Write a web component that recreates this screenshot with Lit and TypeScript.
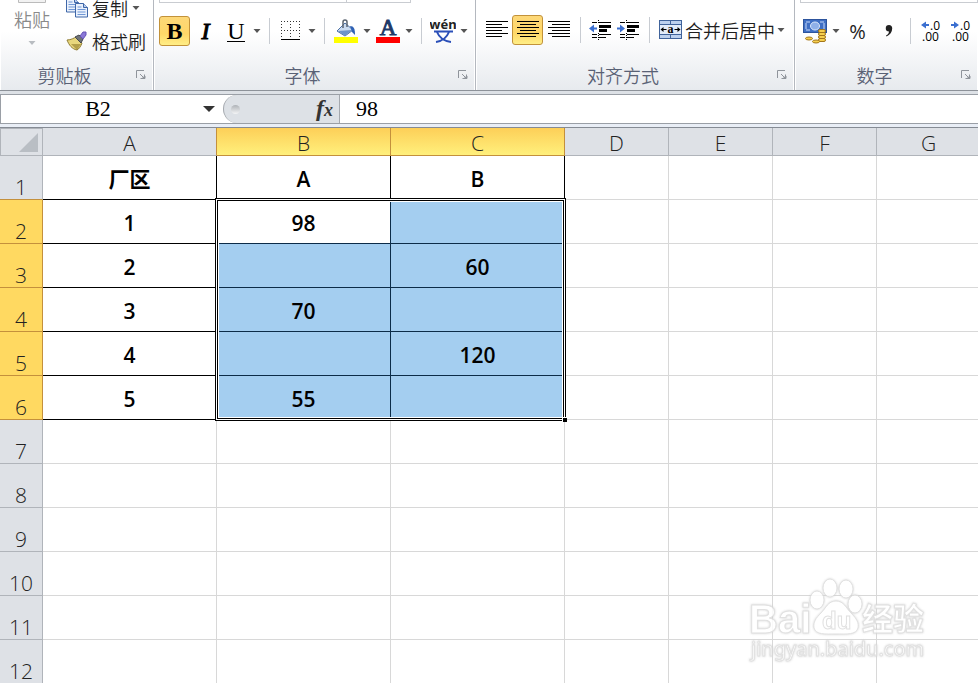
import { LitElement, html, svg, css, nothing } from "lit";
import { customElement } from "lit/decorators.js";
import { classMap } from "lit/directives/class-map.js";
import { styleMap } from "lit/directives/style-map.js";

const controls = css`
  * { box-sizing: border-box; }
  button, input {
    font: inherit;
    color: inherit;
    margin: 0;
    padding: 0;
    border: 0;
    background: none;
    border-radius: 0;
  }
  svg { display: block; flex: none; }
`;

const arrow = html`<svg class="arrow" width="12" height="4" viewBox="0 0 12 4" aria-hidden="true"><path d="M2.5 0h7L6 4z" fill="currentColor" /></svg>`;

const lines = (rows: Array<[number, number]>) => svg`${rows.map(
  ([x, w], i) => svg`<rect x=${x} y=${i * 3} width=${w} height="1" />`
)}`;

const bars = (rows: Array<[number, number]>) => html`<svg width="22" height="18" viewBox="0 0 22 18" fill="#000">${lines(rows)}</svg>`;

const sheet = (x: number, y: number) => svg`
  <g transform="translate(${x} ${y})">
    <path d="M.5 .5h8l4 4v9.500h-12z" fill="#eaf1fc" stroke="#3f67a8" />
    <path d="M8.500 .5v4h4" fill="#b9cdee" stroke="#3f67a8" />
    <path d="M2.500 4h4M2.500 6.500h8M2.500 9h8M2.500 11.500h8" stroke="#6f97d6" />
  </g>`;

const indent = (back: boolean) => html`
  <svg width="24" height="20" viewBox="0 0 24 20">
    <g fill="#000">
      <rect x="3" y="2" width="5" height="1" /><rect x="10" y="2" width="12" height="1" />
      <rect x="10" y="5" width="12" height="3" /><rect x="10" y="9" width="8" height="3" />
      <rect x="3" y="14" width="5" height="1" /><rect x="10" y="14" width="12" height="1" />
      <rect x="3" y="17" width="5" height="1" /><rect x="10" y="17" width="7" height="1" />
    </g>
    <path d="M9.500 0v4M9.500 13v7" stroke="#000" stroke-dasharray="1 1" />
    <path d=${back ? "M0 8.500l5-4v3h3v2h-3v3z" : "M8 8.500l-5-4v3h-3v2h3v3z"} fill="#3a6fd0" />
  </svg>`;

const decimals = (more: boolean) => html`
  <svg class="num" width="24" height="22" viewBox="0 0 24 22">
    <path d=${more ? "M2 5l5-3.500v2.500h3v2h-3v2.500z" : "M10 5l-5-3.500v2.500h-3v2h3v2.500z"} fill="#3a6fd0" />
    <text x="11" y="10">.0</text><text x="3" y="21">.00</text>
  </svg>`;

const icons = {
  copy: html`<svg width="22" height="21" viewBox="0 0 22 21">${sheet(0, 0)}${sheet(9, 5)}</svg>`,
  brush: html`<svg width="22" height="20" viewBox="0 0 22 20">
    <path d="M1 9C5 9 8 7 10 6l6 6c-1 3-3 6-5 7C6 18 3 14 1 9z" fill="#e8d77c" stroke="#8f7c34" />
    <path d="M5 13l6 6 4-6z" fill="#8f7a28" opacity=".6" />
    <path d="M9 6l4-2 4 4-2 4z" fill="#6f7378" stroke="#43474c" />
    <path d="M14 5l3-4 3 0 0 3-3 4z" fill="#8a78d8" stroke="#6453b5" />
  </svg>`,
  borders: html`<svg width="20" height="20" viewBox="0 0 20 20" fill="none" stroke="#333">
    <path d="M0 .5h19M0 9.500h19M.5 0v17M9.500 0v17M18.500 0v17" stroke-dasharray="1 2" />
    <path d="M0 18.500h19" stroke="#000" />
  </svg>`,
  fill: html`<svg width="24" height="24" viewBox="0 0 24 24">
    <path d="M3 12l8-8 8 7-8 6z" fill="#c9daf0" stroke="#4a6fa5" />
    <path d="M4 12l14-1-7 6z" fill="#6d94cb" />
    <path d="M9 9V3a2 2 0 0 1 4 0v5" fill="none" stroke="#5b6470" stroke-width="1.500" />
    <path d="M16 7c4 0 5 3 5 9l-3-3z" fill="#2f62b5" />
    <rect y="18" width="24" height="6" fill="#ff0" />
  </svg>`,
  color: html`<svg class="letter" width="24" height="24" viewBox="0 0 24 24">
    <text x="12" y="16" text-anchor="middle">A</text><rect y="18" width="24" height="6" fill="#f00" />
  </svg>`,
  phonetic: html`<svg class="wen" width="26" height="26" viewBox="0 0 26 26">
    <text class="latin" x="13" y="11" text-anchor="middle">wén</text>
    <path d="M4 13.500h19M7 14c2 5 6 9 14 10M19 14c-2 5-6 9-13 10" fill="none" stroke="#2a4fb8" stroke-width="2" />
  </svg>`,
  merge: html`<svg class="mini" width="24" height="20" viewBox="0 0 24 20">
    <rect x=".5" y=".5" width="22" height="18" fill="#bcd0ee" stroke="#40639b" />
    <path d="M1 4.500h22M1 14.500h22M11.500 1v3M11.500 15v3" stroke="#40639b" />
    <rect x="1" y="5" width="21" height="9" fill="#e2ebf9" />
    <text x="11.500" y="13" text-anchor="middle">a</text>
    <path d="M1.500 9.500l3-2.500v2h3v1h-3v2zM21.500 9.500l-3-2.500v2h-3v1h3v2z" fill="#000" />
  </svg>`,
  currency: html`<svg width="24" height="25" viewBox="0 0 24 25">
    <rect x=".5" y=".5" width="23" height="13" fill="#3f6fc4" stroke="#2d549d" />
    <path d="M3 3h4M17 3h4M3 11h4M17 11h4M3 4v6M21 4v6" stroke="#c7dafa" />
    <ellipse cx="12" cy="7" rx="4.500" ry="4" fill="#8fb0e8" stroke="#dbe7fb" />
    <g fill="#f6cf4e" stroke="#a3761a">
      <rect x="15.500" y="19.500" width="7" height="3" rx="1.500" /><rect x="15.500" y="16.500" width="7" height="3" rx="1.500" />
      <rect x="15.500" y="13.500" width="7" height="3" rx="1.500" /><rect x="15.500" y="10.500" width="7" height="3" rx="1.500" />
      <ellipse cx="6" cy="19.500" rx="3.500" ry="1.500" /><ellipse cx="13" cy="22.500" rx="3.500" ry="1.500" />
    </g>
  </svg>`,
};

@customElement("ribbon-group")
class RibbonGroup extends LitElement {
  static properties = { label: { type: String } };
  declare label: string;
  static styles = [controls, css`
    :host {
      display: flex;
      flex-direction: column;
      min-width: 0;
      height: 90px;
      border-right: 1px solid #b4b8bf;
      box-shadow: inset -1px 0 #fff, inset 1px 0 #fff;
      overflow: hidden;
    }
    :host(:last-of-type) { border-right: 0; }
    .body { flex: 1; min-height: 0; }
    .caption { display: flex; align-items: center; height: 30px; color: #596175; }
    .label { flex: 1; text-align: center; font-size: 18px; line-height: 28px; }
    .launcher { width: 24px; height: 22px; display: flex; align-items: center; justify-content: center; }
  `];
  render() {
    return html`
      <div class="body"><slot></slot></div>
      <div class="caption">
        <span class="label">${this.label}</span>
        <button class="launcher" aria-label=${this.label}>
          <svg width="10" height="10" viewBox="0 0 10 10" stroke="#8f949b" fill="none">
            <path d="M.5 8V.5H8M4 4l4 4M8.500 4.500v4h-4" /><path d="M6 8.500h3V6z" fill="#8f949b" />
          </svg>
        </button>
      </div>`;
  }
}

@customElement("office-ribbon")
class OfficeRibbon extends LitElement {
  static styles = [controls, css`
    :host {
      display: grid;
      grid-template-columns: 154px 322px 319px minmax(183px, 1fr);
      background: linear-gradient(#fff 35%, #e7eaee);
      border-bottom: 1px solid #8d9299;
      color: #1e1e1e;
      font-size: 18px;
    }
    .clipboard { display: flex; }
    .paste {
      display: flex;
      flex-direction: column;
      align-items: center;
      width: 64px;
      height: 56px;
      color: #8a8a8a;
      line-height: 20px;
    }
    .paste .arrow { margin-top: 12px; color: #b8bcc1; }
    .paste .tray { margin-bottom: 6px; }
    .stack { display: flex; flex-direction: column; align-items: flex-start; gap: 13px; }
    .row { display: flex; align-items: center; gap: 4px; height: 24px; padding-left: 2px; line-height: 24px; white-space: nowrap; }
    .row:first-child { height: 16px; }
    .row .arrow { margin-left: -2px; }
    .arrow { color: #555; }
    .combos { display: flex; height: 3px; margin-left: 5px; }
    .combo { border: 1px solid #c9ccd1; border-top: 0; background: #fff; height: 3px; }
    .combo + .combo { border-left: 0; }
    .face { width: 188px; }
    .size { width: 64px; }
    .format { flex: 1; }
    .tools { display: flex; align-items: center; height: 56px; padding-left: 5px; }
    .bare { height: 60px; }
    .tool { display: flex; align-items: center; justify-content: center; width: 31px; height: 30px; }
    .small { width: 28px; }
    .small:last-child { width: 32px; }
    .on { border: 1px solid #c2923a; border-radius: 3px; background: linear-gradient(#fdd878, #ffd768 60%, #ffee86); }
    .split { display: flex; align-items: center; height: 30px; }
    .icon { width: 30px; display: flex; justify-content: center; }
    .merge .icon { width: 29px; }
    .sep { width: 1px; height: 26px; margin: 0 6px; background: #c8ccd2; }
    .serif { font: 24px/28px "Liberation Serif", serif; color: #000; }
    .bold { font-weight: bold; }
    .italic { font-style: italic; -webkit-text-stroke: 1px #000; }
    .underline { border-bottom: 1px solid #000; line-height: 20px; }
    .percent { font: 20px "Open Sans", sans-serif; color: #222; }
    .letter text { font: 23px "Liberation Serif", serif; fill: #1f3a68; stroke: #1f3a68; }
    .latin { font: bold 13px "Noto Sans", sans-serif; fill: #222; }
    .mini text { font: bold 12px "Liberation Serif", serif; }
    .num text { font: 12px "Open Sans", sans-serif; fill: #000; }
    .merge { white-space: nowrap; }
  `];
  split(name: string, icon: unknown) {
    return html`<button class="split" aria-label=${name}><span class="icon">${icon}</span>${arrow}</button>`;
  }
  render() {
    return html`
      <ribbon-group label="剪贴板">
        <div class="clipboard">
          <button class="paste">
            <svg class="tray" width="28" height="3" viewBox="0 0 28 3"><path d="M.5 0v2.500h27V0" fill="#f2f2f2" stroke="#bbb" /></svg>
            粘贴${arrow}
          </button>
          <div class="stack">
            <button class="row">${icons.copy}<span>复制</span>${arrow}</button>
            <button class="row">${icons.brush}<span>格式刷</span></button>
          </div>
        </div>
      </ribbon-group>
      <ribbon-group label="字体">
        <div class="combos"><span class="combo face"></span><span class="combo size"></span></div>
        <div class="tools">
          <button class="tool on" aria-pressed="true"><span class="serif bold">B</span></button>
          <button class="tool"><span class="serif italic">I</span></button>
          ${this.split("U", html`<span class="serif underline">U</span>`)}
          <span class="sep"></span>
          ${this.split("边框", icons.borders)}
          <span class="sep"></span>
          ${this.split("填充颜色", icons.fill)}
          ${this.split("字体颜色", icons.color)}
          <span class="sep"></span>
          ${this.split("拼音", icons.phonetic)}
        </div>
      </ribbon-group>
      <ribbon-group label="对齐方式">
        <div class="tools bare">
          <button class="tool" aria-label="左对齐">${bars([[0, 22], [0, 16], [0, 22], [0, 16], [0, 22], [0, 16]])}</button>
          <button class="tool on" aria-pressed="true" aria-label="居中">${bars([[0, 22], [3, 16], [0, 22], [3, 16], [0, 22], [3, 16]])}</button>
          <button class="tool" aria-label="右对齐">${bars([[0, 22], [4, 18], [0, 22], [4, 18], [0, 22], [4, 18]])}</button>
          <span class="sep"></span>
          <button class="tool small" aria-label="减少缩进">${indent(true)}</button>
          <button class="tool small" aria-label="增加缩进">${indent(false)}</button>
          <span class="sep"></span>
          <button class="split merge"><span class="icon">${icons.merge}</span>合并后居中${arrow}</button>
        </div>
      </ribbon-group>
      <ribbon-group label="数字">
        <div class="combos"><span class="combo format"></span></div>
        <div class="tools">
          ${this.split("货币", icons.currency)}
          <button class="tool percent">%</button>
          <button class="tool" aria-label="千位分隔样式">
            <svg width="8" height="12" viewBox="0 0 8 12"><path d="M4 0a3.200 3.200 0 0 1 3.200 3.500C7.200 7 5 10 1.500 11.500L1 10.500C3 9.500 4 8 4 6.500A3.200 3.200 0 0 1 4 0z" fill="#222" /></svg>
          </button>
          <span class="sep"></span>
          <button class="tool small" aria-label="增加小数位数">${decimals(true)}</button>
          <button class="tool small" aria-label="减少小数位数">${decimals(false)}</button>
        </div>
      </ribbon-group>`;
  }
}

@customElement("formula-bar")
class FormulaBar extends LitElement {
  static styles = [controls, css`
    :host { display: block; background: #dde1e6; padding-top: 3px; border-bottom: 1px solid #858b94; }
    .bar {
      display: flex;
      height: 30px;
      background: #fff;
      border: solid #9a9fa6;
      border-width: 1px 0 1px 1px;
      font: 22px/28px "Liberation Serif", serif;
      color: #000;
    }
    .name { width: 194px; text-align: center; }
    .drop { width: 28px; display: flex; align-items: center; justify-content: center; color: #333; }
    .pill {
      display: flex;
      align-items: center;
      justify-content: space-between;
      width: 117px;
      padding: 0 6px 0 7px;
      background: #dde1e6;
      border: 1px solid #a4a8ae;
      border-width: 0 1px;
      border-radius: 14px 0 0 14px;
    }
    .knob { width: 9px; height: 9px; border-radius: 5px; background: linear-gradient(#aeb2b7, #f4f5f6); }
    .fx { font: italic bold 24px/26px "Liberation Serif", serif; color: #333; display: flex; align-items: baseline; }
    .fx small { font-size: 18px; }
    .value { flex: 1; min-width: 0; padding-left: 16px; }
    .foot { height: 3px; background: #e9eef6; }
  `];
  render() {
    return html`
      <div class="bar">
        <input class="name" aria-label="名称框" value="B2" />
        <button class="drop" aria-label="名称列表"><svg width="12" height="6" viewBox="0 0 12 6"><path d="M0 0h12L6 6z" fill="currentColor" /></svg></button>
        <div class="pill"><span class="knob"></span><button class="fx">f<small>x</small></button></div>
        <input class="value" aria-label="编辑栏" value="98" />
      </div>
      <div class="foot"></div>`;
  }
}

const HEAD_W = 43;
const HEAD_H = 28;
const ROW_H = 44;
const COLUMNS: Array<[string, number]> = [["A", 174], ["B", 174], ["C", 174], ["D", 104], ["E", 104], ["F", 104], ["G", 104]];
const ROWS = 12;
const DATA: string[][] = [
  ["厂区", "A", "B"],
  ["1", "98", ""],
  ["2", "", "60"],
  ["3", "70", ""],
  ["4", "", "120"],
  ["5", "55", ""],
];
const SELECTED = { left: 1, right: 2, top: 1, bottom: 5 };

@customElement("sheet-grid")
class SheetGrid extends LitElement {
  static styles = [controls, css`
    :host {
      display: block;
      position: relative;
      flex: 1;
      min-height: 0;
      overflow: hidden;
      background: #fff;
      font-family: "Open Sans", "Noto Sans CJK SC", sans-serif;
    }
    table { table-layout: fixed; border-collapse: separate; border-spacing: 0; width: max-content; font-size: 21px; }
    th, td { padding: 0; overflow: hidden; text-align: center; border: 0 solid #d8d8d8; border-width: 0 1px 1px 0; }
    td { height: 44px; line-height: 30px; font-weight: 600; color: #000; padding-top: 3px; }
    th { font-weight: 300; color: #222; background: #dee1e6; border-color: #b0b4ba; }
    thead th { height: 28px; line-height: 24px; padding-top: 2px; }
    tbody th { height: 44px; vertical-align: bottom; line-height: 24px; }
    thead .picked { background: linear-gradient(#fdcf58, #fff07c); border-color: #c4903c; }
    tbody .picked { background: #ffd961; border-color: #c4903c; }
    thead .before { border-right-color: #c4903c; }
    tbody .before { border-bottom-color: #c4903c; }
    .corner { border-left: 1px solid #b0b4ba; box-shadow: inset 0 1px #b0b4ba; }
    .corner svg { margin: 1px 0 0 18px; }
    .ruled { border-color: #000; }
    .blue { background: #a4cef0; }
    .inner { border-color: #0c2c48; }
    .range {
      position: absolute;
      border: 1px solid #000;
      box-shadow: inset 0 0 0 1px #fff, inset 0 0 0 2px #000, inset 0 0 0 3px #fff;
      pointer-events: none;
    }
    .handle { position: absolute; right: -2px; bottom: -2px; width: 5px; height: 5px; background: #000; border: 1px solid #fff; border-width: 1px 0 0 1px; }
  `];
  render() {
    const s = SELECTED;
    const offset = (n: number) => HEAD_W + COLUMNS.slice(0, n).reduce((sum, [, w]) => sum + w, 0);
    const left = offset(s.left) - 2;
    const top = HEAD_H + s.top * ROW_H - 2;
    const box = {
      left: `${left}px`,
      top: `${top}px`,
      width: `${offset(s.right + 1) + 1 - left}px`,
      height: `${HEAD_H + (s.bottom + 1) * ROW_H + 1 - top}px`,
    };
    const inCols = (c: number) => c >= s.left && c <= s.right;
    const inRows = (r: number) => r >= s.top && r <= s.bottom;
    return html`
      <table>
        <colgroup>
          <col style=${styleMap({ width: `${HEAD_W}px` })} />
          ${COLUMNS.map(([, w]) => html`<col style=${styleMap({ width: `${w}px` })} />`)}
        </colgroup>
        <thead>
          <tr>
            <th class="corner"><svg width="20" height="20" viewBox="0 0 20 20"><path d="M19 0v19H0z" fill="#b9bec4" /></svg></th>
            ${COLUMNS.map(([name], c) => html`<th scope="col" class=${classMap({ picked: inCols(c), before: c === s.left - 1 })}>${name}</th>`)}
          </tr>
        </thead>
        <tbody>
          ${Array.from({ length: ROWS }, (_, r) => html`
            <tr>
              <th scope="row" class=${classMap({ picked: inRows(r), before: r === s.top - 1 })}>${r + 1}</th>
              ${COLUMNS.map((_col, c) => {
                const text = DATA[r]?.[c];
                const chosen = inCols(c) && inRows(r);
                const active = c === s.left && r === s.top;
                return html`<td class=${classMap({ ruled: text !== undefined, inner: chosen, blue: chosen && !active })}>${text || nothing}</td>`;
              })}
            </tr>`)}
        </tbody>
      </table>
      <div class="range" style=${styleMap(box)}><span class="handle"></span></div>`;
  }
}

@customElement("site-mark")
class SiteMark extends LitElement {
  static styles = css`
    :host { display: block; opacity: 0.85; pointer-events: none; }
    svg { display: block; filter: drop-shadow(0 0 1px #ccc); }
    text, .pad { fill: #fff; stroke: #dcdcdc; stroke-width: 1px; }
    .big { font: bold 40px "Liberation Sans", sans-serif; }
    .du { font: bold 24px "Liberation Sans", sans-serif; }
    .cjk { font: bold 31px "Noto Sans CJK SC", sans-serif; }
    .url { font: 20px "Noto Sans", sans-serif; }
  `;
  render() {
    return html`
      <svg width="200" height="105" viewBox="0 0 200 105">
        <text class="big" x="9" y="63">Bai</text>
        <g class="pad">
          <ellipse cx="77" cy="30" rx="7" ry="9" /><ellipse cx="90" cy="18" rx="7" ry="9" />
          <ellipse cx="106" cy="19" rx="7" ry="9" /><ellipse cx="115" cy="34" rx="7" ry="9" />
          <path d="M96 31c8 0 10 7 15 12c6 6 8 10 7 15c-2 7-11 6-22 6s-20 1-22-6c-1-6 2-10 7-15c5-5 7-12 15-12z" />
        </g>
        <text class="du" x="82" y="59">du</text>
        <text class="cjk" x="122" y="60">经验</text>
        <text class="url" x="11" y="86">jingyan.baidu.com</text>
      </svg>`;
  }
}

@customElement("app-root")
class AppRoot extends LitElement {
  static styles = css`
    :host {
      display: flex;
      flex-direction: column;
      position: relative;
      height: 100vh;
      overflow: hidden;
      background: #fff;
      font-family: "Noto Sans CJK SC", "Noto Sans", sans-serif;
      font-weight: 350;
    }
    .mark { position: absolute; right: 38px; bottom: 8px; }
  `;
  render() {
    return html`
      <office-ribbon></office-ribbon>
      <formula-bar></formula-bar>
      <sheet-grid></sheet-grid>
      <site-mark class="mark"></site-mark>`;
  }
}
